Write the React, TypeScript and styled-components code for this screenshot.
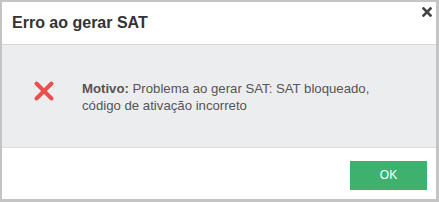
import React from 'react';
import styled, { createGlobalStyle } from 'styled-components';

const GlobalStyle = createGlobalStyle`
  html, body {
    margin: 0;
    padding: 0;
    background: #c4c4c4;
  }
  body {
    font-family: 'Liberation Sans', Arial, sans-serif;
  }
`;

const Backdrop = styled.div`
  width: 439px;
  height: 202px;
  padding: 2px 3px 3px 2px;
  box-sizing: border-box;
`;

const Modal = styled.div`
  height: 100%;
  background: #ffffff;
  display: flex;
  flex-direction: column;
`;

const Header = styled.div`
  position: relative;
  height: 42px;
  padding: 0 10px;
  display: flex;
  align-items: center;
  border-bottom: 1px solid #d6d6d6;
`;

const Title = styled.h4`
  margin: 0;
  font-size: 16px;
  font-weight: 700;
  color: #333333;
`;

const Close = styled.button`
  position: absolute;
  top: 4px;
  right: 3px;
  border: 0;
  background: none;
  padding: 0;
  cursor: pointer;
  width: 12px;
  height: 12px;
  display: flex;
  align-items: center;
  justify-content: center;
`;

const Body = styled.div`
  height: 102px;
  background: #ecedef;
  border-bottom: 1px solid #dcdcdc;
  display: flex;
  align-items: center;
  padding-left: 31px;
`;

const IconWrap = styled.div`
  width: 22px;
  height: 22px;
  margin-right: 27px;
  margin-top: -10px;
`;

const Message = styled.p`
  margin: 0;
  margin-top: 2px;
  font-size: 13.2px;
  line-height: 17px;
  color: #555555;
  max-width: 300px;

  b {
    font-weight: 700;
  }
`;

const Footer = styled.div`
  flex: 1;
  display: flex;
  align-items: center;
  justify-content: flex-end;
  padding: 3px 9px 0 0;
`;

const OkButton = styled.button`
  width: 77px;
  height: 29px;
  border: 0;
  background: #3db16d;
  color: #ffffff;
  font-family: 'Liberation Sans', Arial, sans-serif;
  font-size: 12px;
  cursor: pointer;
`;

export default function App() {
  return (
    <>
      <GlobalStyle />
      <Backdrop>
        <Modal>
          <Header>
            <Title>Erro ao gerar SAT</Title>
            <Close aria-label="Fechar">
              <svg width="10" height="10" viewBox="0 0 10 10">
                <path d="M1.5 1.5 L8.5 8.5 M8.5 1.5 L1.5 8.5" stroke="#444" strokeWidth="2.6" strokeLinecap="square" />
              </svg>
            </Close>
          </Header>
          <Body>
            <IconWrap>
              <svg width="22" height="22" viewBox="0 0 22 22">
                <path d="M3.5 3.5 L18.5 18.5 M18.5 3.5 L3.5 18.5" stroke="#e9514f" strokeWidth="4" strokeLinecap="round" />
              </svg>
            </IconWrap>
            <Message>
              <b>Motivo:</b> Problema ao gerar SAT: SAT bloqueado, código de ativação incorreto
            </Message>
          </Body>
          <Footer>
            <OkButton>OK</OkButton>
          </Footer>
        </Modal>
      </Backdrop>
    </>
  );
}
